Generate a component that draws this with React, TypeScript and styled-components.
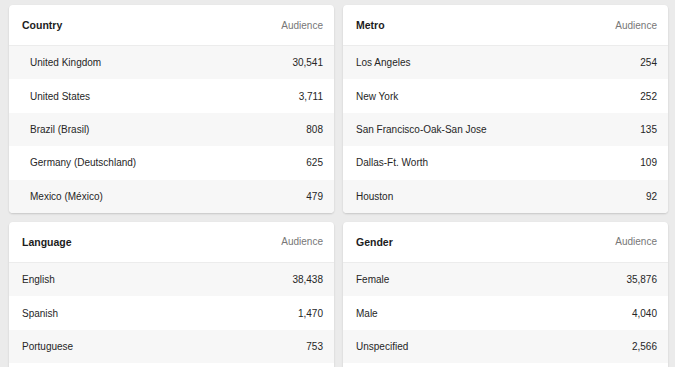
import styled, { createGlobalStyle } from "styled-components";

type Row = { label: string; value: string };
type Panel = { title: string; rows: Row[]; indent?: boolean };

const panels: Panel[] = [
  {
    title: "Country",
    indent: true,
    rows: [
      { label: "United Kingdom", value: "30,541" },
      { label: "United States", value: "3,711" },
      { label: "Brazil (Brasil)", value: "808" },
      { label: "Germany (Deutschland)", value: "625" },
      { label: "Mexico (México)", value: "479" },
    ],
  },
  {
    title: "Metro",
    rows: [
      { label: "Los Angeles", value: "254" },
      { label: "New York", value: "252" },
      { label: "San Francisco-Oak-San Jose", value: "135" },
      { label: "Dallas-Ft. Worth", value: "109" },
      { label: "Houston", value: "92" },
    ],
  },
  {
    title: "Language",
    rows: [
      { label: "English", value: "38,438" },
      { label: "Spanish", value: "1,470" },
      { label: "Portuguese", value: "753" },
    ],
  },
  {
    title: "Gender",
    rows: [
      { label: "Female", value: "35,876" },
      { label: "Male", value: "4,040" },
      { label: "Unspecified", value: "2,566" },
    ],
  },
];

function App() {
  return (
    <>
      <GlobalStyle />
      <S.Page>
        {panels.map((p) => (
          <S.Card key={p.title}>
            <S.Header>
              <S.Title>{p.title}</S.Title>
              <S.Column>Audience</S.Column>
            </S.Header>
            {p.rows.map((r, i) => (
              <S.Row key={r.label} $indent={p.indent} $shaded={i % 2 === 0}>
                <span>{r.label}</span>
                <span>{r.value}</span>
              </S.Row>
            ))}
          </S.Card>
        ))}
      </S.Page>
    </>
  );
}

const GlobalStyle = createGlobalStyle`
  html, body {
    margin: 0;
    background: #ebebeb;
    font-family: "Liberation Sans", Arial, sans-serif;
    height: 367px;
    overflow: hidden;
  }
`;

const S = {
  // second row of cards runs on past the bottom of the window
  Page: styled.div`
    display: grid;
    grid-template-columns: 1fr 1fr;
    grid-template-rows: auto 1fr;
    column-gap: 9px;
    row-gap: 9px;
    min-height: 400px;
    padding: 5px 7px 0 9px;
  `,
  Card: styled.section`
    background: #ffffff;
    border-radius: 4px;
    box-shadow: 0 1px 2px rgba(0, 0, 0, 0.16);
    overflow: hidden;
  `,
  Header: styled.div`
    display: flex;
    align-items: center;
    justify-content: space-between;
    height: 40px;
    padding: 0 11px 0 13px;
    border-bottom: 1px solid #ececec;
  `,
  Title: styled.h2`
    margin: 0;
    font-size: 10.5px;
    font-weight: bold;
    color: #1c1c1c;
  `,
  Column: styled.span`
    font-size: 10px;
    color: #777777;
  `,
  Row: styled.div<{ $indent?: boolean; $shaded: boolean }>`
    display: flex;
    align-items: center;
    justify-content: space-between;
    height: 33.4px;
    padding: 0 11px 0 ${(p) => (p.$indent ? "21px" : "13px")};
    font-size: 10px;
    color: #262626;
    background: ${(p) => (p.$shaded ? "#f7f7f7" : "#ffffff")};
  `,
};

export default App;
